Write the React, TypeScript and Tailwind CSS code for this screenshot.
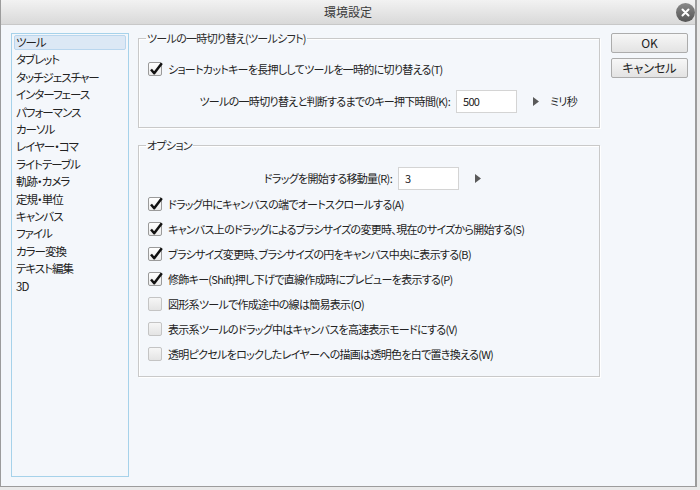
import React from "react";

const categories = [
  "ツール",
  "タブレット",
  "タッチジェスチャー",
  "インターフェース",
  "パフォーマンス",
  "カーソル",
  "レイヤー・コマ",
  "ライトテーブル",
  "軌跡・カメラ",
  "定規・単位",
  "キャンバス",
  "ファイル",
  "カラー変換",
  "テキスト編集",
  "3D",
];

const options = [
  { label: "ドラッグ中にキャンバスの端でオートスクロールする(A)", checked: true },
  { label: "キャンバス上のドラッグによるブラシサイズの変更時、現在のサイズから開始する(S)", checked: true },
  { label: "ブラシサイズ変更時、ブラシサイズの円をキャンバス中央に表示する(B)", checked: true },
  { label: "修飾キー(Shift)押し下げで直線作成時にプレビューを表示する(P)", checked: true },
  { label: "図形系ツールで作成途中の線は簡易表示(O)", checked: false },
  { label: "表示系ツールのドラッグ中はキャンバスを高速表示モードにする(V)", checked: false },
  { label: "透明ピクセルをロックしたレイヤーへの描画は透明色を白で置き換える(W)", checked: false },
];

const Checkbox = ({ checked }: { checked: boolean }) =>
  checked ? (
    <span className="relative h-[14px] w-[14px] shrink-0 rounded-[2px] border border-[#9a9a9a] bg-gradient-to-b from-[#ffffff] to-[#ececec]">
      <svg width="16" height="16" viewBox="0 0 16 16" className="absolute left-[-1px] top-[-2px]">
        <path d="M3 8.5 L6.2 12.2 L13.8 2.3" fill="none" stroke="#111" strokeWidth="2.5" strokeLinejoin="round" />
      </svg>
    </span>
  ) : (
    <span className="h-[14px] w-[14px] shrink-0 rounded-[2px] border border-[#c4c4c4] bg-gradient-to-b from-[#f6f6f6] to-[#e4e4e4]" />
  );

const Arrow = () => (
  <svg width="6" height="9" viewBox="0 0 6 9" className="shrink-0">
    <polygon points="0,0 6,4.5 0,9" fill="#5a5a5a" />
  </svg>
);

const Group = ({ title, children, className }: { title: string; children: React.ReactNode; className?: string }) => (
  <fieldset
    className={`border border-[#c9c9c9] pl-[7px] pr-[8px] shadow-[inset_1px_1px_0_#ffffff,1px_1px_0_#ffffff] ${className ?? ""}`}
  >
    <legend className="px-[1px] text-[#2a2a2a] leading-[16px]">{title}</legend>
    {children}
  </fieldset>
);

export default function App() {
  return (
    <div className="h-[490px] w-[700px] overflow-hidden bg-[#e9e9e9] text-[11px] tracking-[-0.7px] text-[#222] [font-feature-settings:'palt'] [font-family:'Noto_Sans_CJK_JP','Noto_Sans',sans-serif]">
      <div className="flex h-[487px] w-[697px] flex-col border-b border-l border-r-2 border-[#9c9c9c] bg-[#f4f7fb]">
        {/* title bar */}
        <div className="relative flex h-[25px] shrink-0 items-center justify-center border-b border-[#c8c8c8] bg-gradient-to-b from-[#f2f2f2] to-[#d9d9d9]">
          <span className="text-[12px] tracking-normal text-[#3a3a3a]">環境設定</span>
          <span className="absolute right-[0px] top-[3px] flex h-[19px] w-[19px] items-center justify-center rounded-full bg-gradient-to-b from-[#8a8a8a] to-[#555555]">
            <svg width="9" height="9" viewBox="0 0 9 9">
              <path d="M1.5 1.5 L7.5 7.5 M7.5 1.5 L1.5 7.5" stroke="#fff" strokeWidth="2" strokeLinecap="round" />
            </svg>
          </span>
        </div>

        <div className="flex flex-1 pl-[10px] pt-[5px]">
          {/* category list */}
          <div className="mt-[3px] h-[444px] w-[118px] shrink-0 border border-[#a6d2ea] bg-[#f4f7fb] text-[11.5px] tracking-[-1px]">
            {categories.map((c, i) => (
              <div key={c} className="flex h-[17.4px] items-center px-[2px]">
                <span
                  className={`flex h-[15px] w-full items-center px-[1px] ${
                    i === 0 ? "rounded-[2px] border border-[#b9d6ee] bg-[#dce8f5]" : "border border-transparent"
                  }`}
                >
                  {c}
                </span>
              </div>
            ))}
          </div>

          {/* settings */}
          <div className="ml-[9px] flex w-[462px] shrink-0 flex-col">
            <Group title="ツールの一時切り替え(ツールシフト)" className="h-[98px]">
              <div className="mt-[13px] flex h-[20px] items-center gap-[6px] pl-[2px]">
                <Checkbox checked />
                <span>ショートカットキーを長押ししてツールを一時的に切り替える(T)</span>
              </div>
              <div className="mt-[11px] flex h-[23px] items-center">
                <span className="w-[310px] shrink-0 pr-[6px] text-right">ツールの一時切り替えと判断するまでのキー押下時間(K):</span>
                <span className="flex h-[23px] w-[61px] items-center border border-[#d4d4d4] bg-white pl-[6px]">500</span>
                <span className="ml-[16px]">
                  <Arrow />
                </span>
                <span className="ml-[11px]">ミリ秒</span>
              </div>
            </Group>

            <Group title="オプション" className="mt-[9px] h-[240px]">
              <div className="mt-[14px] flex h-[23px] items-center">
                <span className="w-[252px] shrink-0 pr-[6px] text-right">ドラッグを開始する移動量(R):</span>
                <span className="flex h-[23px] w-[61px] items-center border border-[#d4d4d4] bg-white pl-[6px]">3</span>
                <span className="ml-[16px]">
                  <Arrow />
                </span>
              </div>
              <div className="mt-[4px] flex flex-col gap-[5px]">
                {options.map((o) => (
                  <div key={o.label} className="flex h-[20px] items-center gap-[6px] pl-[2px]">
                    <Checkbox checked={o.checked} />
                    <span>{o.label}</span>
                  </div>
                ))}
              </div>
            </Group>
          </div>

          {/* buttons */}
          <div className="ml-[11px] mt-[3px] flex w-[77px] shrink-0 flex-col gap-[5px] tracking-normal">
            <button className="h-[20px] rounded-[2px] border border-[#acacac] bg-gradient-to-b from-[#f7f7f7] to-[#e3e3e3] text-[12px] leading-none">
              OK
            </button>
            <button className="h-[20px] rounded-[2px] border border-[#acacac] bg-gradient-to-b from-[#f7f7f7] to-[#e3e3e3] text-[12px] leading-none">
              キャンセル
            </button>
          </div>
        </div>
      </div>
    </div>
  );
}
